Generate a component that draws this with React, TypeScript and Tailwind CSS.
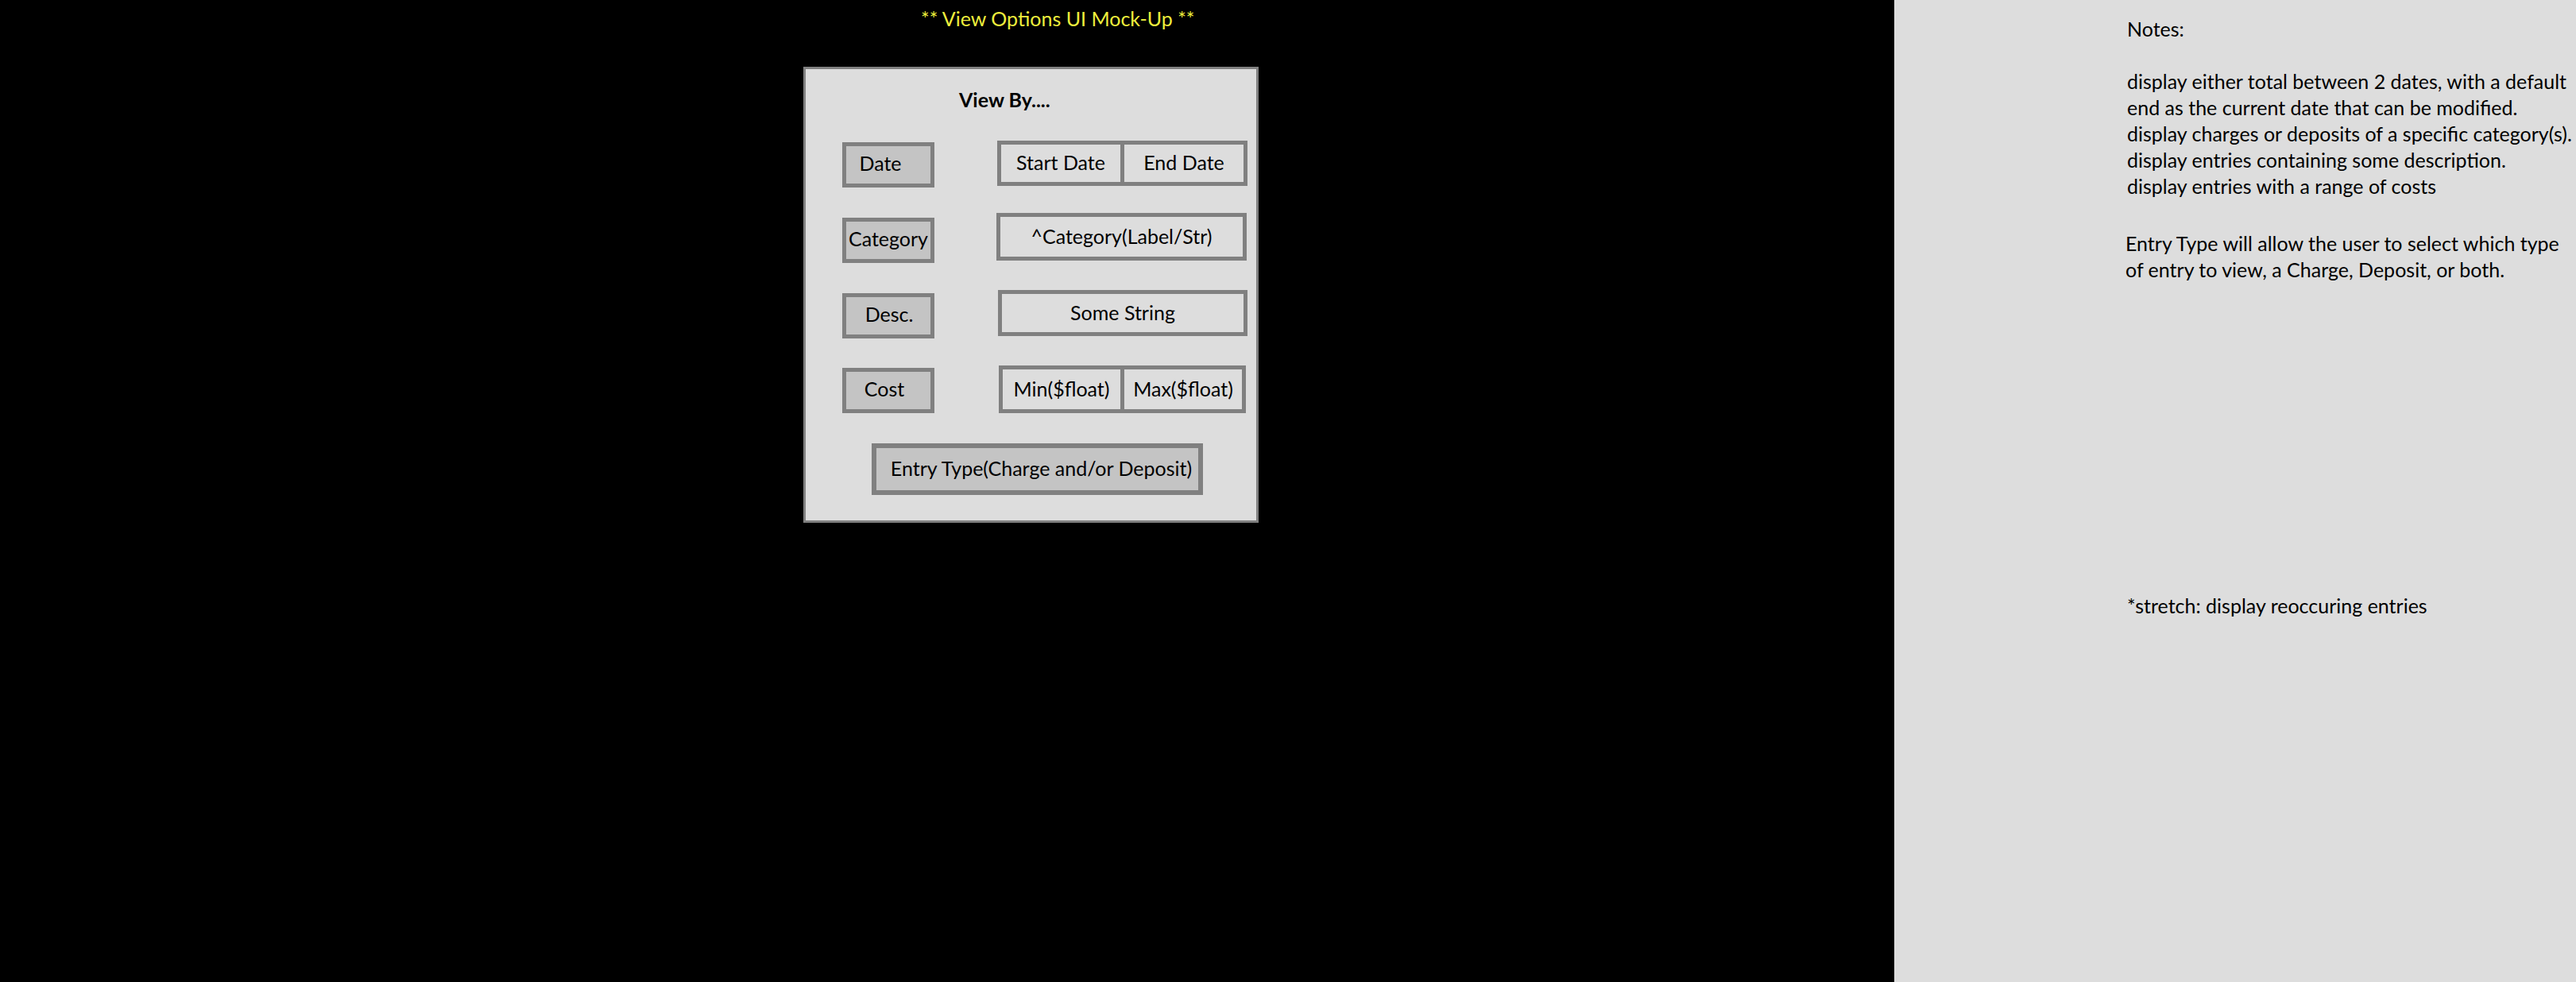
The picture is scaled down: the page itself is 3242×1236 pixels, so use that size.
import React from 'react';

const font = "font-['Lato','Liberation_Sans',sans-serif]";

function SideButton({ label, top, shift }: { label: string; top: string; shift: string }) {
  return (
    <div
      className={`${top} w-[116px] h-[57px] shrink-0 border-[5px] border-[#808080] bg-[#c4c4c4] flex items-center justify-center pb-[5px] ${shift}`}
    >
      <span className="whitespace-nowrap">{label}</span>
    </div>
  );
}

function Field({ cells, className }: { cells: string[]; className: string }) {
  return (
    <div className={`border-[5px] border-[#808080] bg-[#dddddd] flex ${className}`}>
      {cells.map((c, i) => (
        <div
          key={c}
          className={`flex-1 flex items-center justify-center whitespace-nowrap pb-[2px] ${
            i < cells.length - 1 ? 'border-r-[5px] border-[#808080]' : ''
          }`}
        >
          {c}
        </div>
      ))}
    </div>
  );
}

export default function App() {
  return (
    <div className={`${font} text-[25px] leading-[33px] flex w-full min-h-[1236px] text-black`}>
      {/* left canvas */}
      <div className="w-[2384px] shrink-0 bg-black">
        <div className="pt-[7px] pl-[1159px] text-[#eeee3c] whitespace-nowrap">** View Options UI Mock-Up **</div>

        <div className="ml-[1011px] mt-[44px] w-[573px] h-[574px] border-[3px] border-[#808080] bg-[#dddddd]">
          <div className="pt-[22px] pl-[193px] font-bold">View By....</div>

          <div className="pl-[46px] mt-[35px] flex flex-col">
            {/* Date */}
            <div className="flex items-start">
              <SideButton label="Date" top="mt-[2px]" shift="pr-[20px]" />
              <Field cells={['Start Date', 'End Date']} className="ml-[79px] w-[315px] h-[57px]" />
            </div>
            {/* Category */}
            <div className="flex items-start mt-[32px]">
              <SideButton label="Category" top="mt-[6px]" shift="" />
              <Field cells={['^Category(Label/Str)']} className="ml-[78px] w-[315px] h-[60px]" />
            </div>
            {/* Description */}
            <div className="flex items-start mt-[34px]">
              <SideButton label="Desc." top="mt-[4px]" shift="pl-[2px]" />
              <Field cells={['Some String']} className="ml-[80px] w-[314px] h-[58px]" />
            </div>
            {/* Cost */}
            <div className="flex items-start mt-[34px]">
              <SideButton label="Cost" top="mt-[3px]" shift="pr-[10px]" />
              <Field cells={['Min($float)', 'Max($float)']} className="ml-[81px] w-[311px] h-[60px]" />
            </div>
          </div>

          <div className="ml-[83px] mt-[38px] w-[417px] h-[65px] border-[6px] border-[#808080] bg-[#c4c4c4] flex items-center justify-center pl-[10px] pb-[2px] whitespace-nowrap">
            Entry Type(Charge and/or Deposit)
          </div>
        </div>
      </div>

      {/* notes pane */}
      <div className="flex-1 bg-[#dddddd] pt-[20px] pl-[293px] whitespace-nowrap">
        <div>Notes:</div>
        <div className="h-[33px]" />
        <div>display either total between 2 dates, with a default</div>
        <div>end as the current date that can be modified.</div>
        <div>display charges or deposits of a specific category(s).</div>
        <div>display entries containing some description.</div>
        <div>display entries with a range of costs</div>

        <div className="mt-[39px] -ml-[2px]">
          <div>Entry Type will allow the user to select which type</div>
          <div>of entry to view, a Charge, Deposit, or both.</div>
        </div>

        <div className="mt-[390px]">*stretch: display reoccuring entries</div>
      </div>
    </div>
  );
}
